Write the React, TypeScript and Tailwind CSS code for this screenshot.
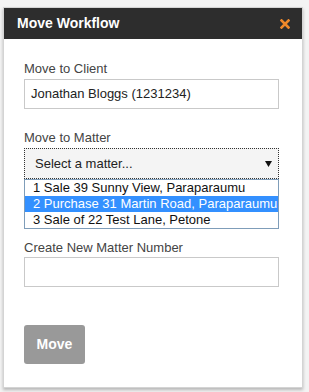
import React from 'react';

const matters = [
  '1 Sale 39 Sunny View, Paraparaumu',
  '2 Purchase 31 Martin Road, Paraparaumu',
  '3 Sale of 22 Test Lane, Petone',
];

const App: React.FC = () => {
  const highlighted = 1;

  return (
    <div className="min-h-screen bg-[#f3f3f3] pl-[3px] pt-[7px] font-['Liberation_Sans',Arial,sans-serif]">
      <div className="w-[300px] h-[381px] bg-white border border-[#d4d4d4] shadow-[0_2px_3px_rgba(0,0,0,0.25)] flex flex-col">
        <div className="h-[31px] bg-[#2d2d2d] flex items-center justify-between pl-[13px] pr-[12px]">
          <span className="text-white font-bold text-[14px]">Move Workflow</span>
          <svg width="10" height="10" viewBox="0 0 10 10">
            <path d="M1.5 1.5 L8.5 8.5 M8.5 1.5 L1.5 8.5" stroke="#f0892a" strokeWidth="2.6" strokeLinecap="square" />
          </svg>
        </div>

        <div className="pl-[20px] pt-[22px] flex flex-col text-[13px] text-[#444]">
          <label className="leading-[15px] mb-[3px]">Move to Client</label>
          <div className="w-[255px] h-[30px] border border-[#c9c9c9] flex items-center pl-[6px] text-[#222]">
            Jonathan Bloggs (1231234)
          </div>

          <label className="leading-[15px] mt-[21px] mb-[3px]">Move to Matter</label>
          <div className="relative w-[255px]">
            <div className="h-[31px] border border-dotted border-[#333] bg-[#f4f4f4] flex items-center justify-between pl-[10px] pr-[6px] text-[#222]">
              <span>Select a matter...</span>
              <svg width="7" height="6" viewBox="0 0 7 6">
                <path d="M0 0 H7 L3.5 6 Z" fill="#111" />
              </svg>
            </div>
            <ul className="absolute left-0 right-0 top-full bg-white border border-[#7f9db9] z-10">
              {matters.map((m, i) => (
                <li
                  key={m}
                  className={`h-[16px] leading-[16px] pl-[8px] whitespace-nowrap ${
                    i === highlighted ? 'bg-[#3390ff] text-white' : 'text-[#111]'
                  }`}
                >
                  {m}
                </li>
              ))}
            </ul>
          </div>

          <label className="leading-[15px] mt-[61px] mb-[2px]">Create New Matter Number</label>
          <div className="w-[255px] h-[30px] border border-[#c9c9c9]" />

          <div className="mt-[38px]">
            <button className="w-[61px] h-[39px] rounded-[3px] bg-[#999] text-white font-bold text-[14px]">
              Move
            </button>
          </div>
        </div>
      </div>
    </div>
  );
};

export default App;
